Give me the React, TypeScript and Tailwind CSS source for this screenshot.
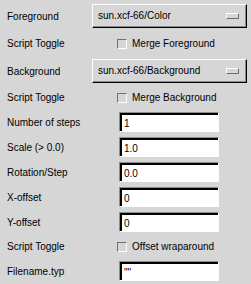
import React from 'react'

const font = { fontFamily: '"Liberation Sans", Arial, sans-serif' }

function Label({ children }: { children: React.ReactNode }) {
  return <div className="w-[85px] shrink-0 whitespace-nowrap">{children}</div>
}

function OptionButton({ value }: { value: string }) {
  return (
    <div className="flex h-[24px] w-[155px] items-center justify-between border border-t-white border-l-white border-b-black border-r-black">
      <div className="flex h-full w-full items-center justify-between border-b border-r border-b-[#8c8c8c] border-r-[#8c8c8c] pl-[5px] pr-[6px]">
        <span>{value}</span>
        <span className="h-[6px] w-[13px] border border-t-white border-l-white border-b-[#6e6e6e] border-r-[#6e6e6e]" />
      </div>
    </div>
  )
}

function Toggle({ label }: { label: string }) {
  return (
    <div className="flex items-center gap-[5px] pl-[25px]">
      <span className="h-[10px] w-[10px] border border-t-[#6e6e6e] border-l-[#6e6e6e] border-b-white border-r-white" />
      <span>{label}</span>
    </div>
  )
}

function Field({ value }: { value: string }) {
  return (
    <div className="ml-[27px] h-[20px] w-[100px] border border-t-[#8c8c8c] border-l-[#8c8c8c] border-b-white border-r-white">
      <div className="flex h-full items-center border-t-2 border-l-2 border-black bg-white pl-[2px]">
        {value}
      </div>
    </div>
  )
}

const fields = [
  { label: 'Number of steps', value: '1' },
  { label: 'Scale (> 0.0)', value: '1.0' },
  { label: 'Rotation/Step', value: '0.0' },
  { label: 'X-offset', value: '0' },
  { label: 'Y-offset', value: '0' },
]

export default function App() {
  return (
    <div className="h-[284px] w-[251px] bg-[#d6d6d6] pl-[7px] pt-[4px] text-[10px] text-black" style={font}>
      <div className="flex h-[24px] items-center">
        <Label>Foreground</Label>
        <OptionButton value="sun.xcf-66/Color" />
      </div>
      <div className="flex h-[31px] items-center">
        <Label>Script Toggle</Label>
        <Toggle label="Merge Foreground" />
      </div>
      <div className="flex h-[24px] items-center">
        <Label>Background</Label>
        <OptionButton value="sun.xcf-66/Background" />
      </div>
      <div className="flex h-[29px] items-center">
        <Label>Script Toggle</Label>
        <Toggle label="Merge Background" />
      </div>
      <div className="flex flex-col gap-[5px]">
        {fields.map(f => (
          <div key={f.label} className="flex h-[20px] items-center">
            <Label>{f.label}</Label>
            <Field value={f.value} />
          </div>
        ))}
      </div>
      <div className="flex h-[29px] items-center">
        <Label>Script Toggle</Label>
        <Toggle label="Offset wraparound" />
      </div>
      <div className="flex h-[20px] items-center">
        <Label>Filename.typ</Label>
        <Field value={'""'} />
      </div>
    </div>
  )
}
